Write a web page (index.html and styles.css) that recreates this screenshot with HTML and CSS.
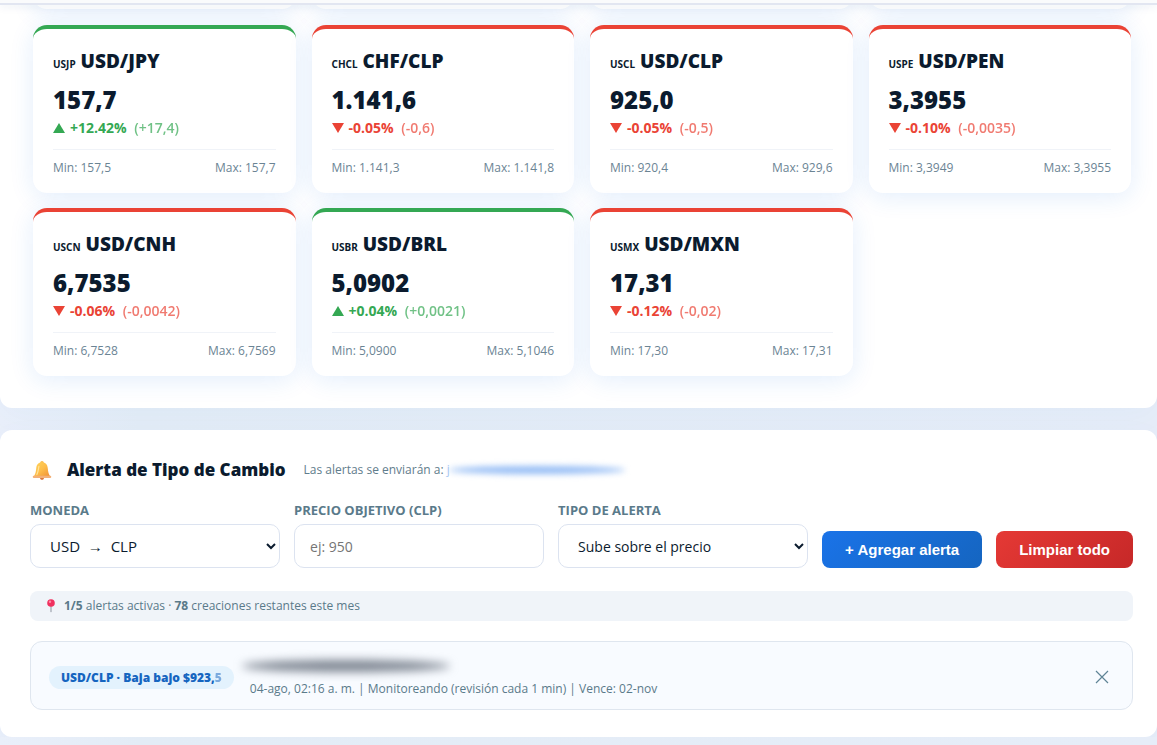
FILE: index.html
```html
<!DOCTYPE html>
<html lang="es">
<head>
	<title>Tipo de Cambio</title>
	<meta charset="utf-8">
	<link rel="stylesheet" href="styles.css">
</head>
<body>
	<header class="topbar"></header>

	<section class="panel rates">
		<div class="prevrow">
			<div></div>
			<div></div>
			<div></div>
			<div></div>
		</div>
		<div class="cards">
			<article class="card up">
				<h3><small>USJP</small> USD/JPY</h3>
				<div class="price">157,7</div>
				<div class="change"><i class="arrow"></i>+12.42% <span>(+17,4)</span></div>
				<div class="range"><span>Min: 157,5</span><span>Max: 157,7</span></div>
			</article>
			<article class="card down">
				<h3><small>CHCL</small> CHF/CLP</h3>
				<div class="price">1.141,6</div>
				<div class="change"><i class="arrow"></i>-0.05% <span>(-0,6)</span></div>
				<div class="range"><span>Min: 1.141,3</span><span>Max: 1.141,8</span></div>
			</article>
			<article class="card down">
				<h3><small>USCL</small> USD/CLP</h3>
				<div class="price">925,0</div>
				<div class="change"><i class="arrow"></i>-0.05% <span>(-0,5)</span></div>
				<div class="range"><span>Min: 920,4</span><span>Max: 929,6</span></div>
			</article>
			<article class="card down">
				<h3><small>USPE</small> USD/PEN</h3>
				<div class="price">3,3955</div>
				<div class="change"><i class="arrow"></i>-0.10% <span>(-0,0035)</span></div>
				<div class="range"><span>Min: 3,3949</span><span>Max: 3,3955</span></div>
			</article>
			<article class="card down">
				<h3><small>USCN</small> USD/CNH</h3>
				<div class="price">6,7535</div>
				<div class="change"><i class="arrow"></i>-0.06% <span>(-0,0042)</span></div>
				<div class="range"><span>Min: 6,7528</span><span>Max: 6,7569</span></div>
			</article>
			<article class="card up">
				<h3><small>USBR</small> USD/BRL</h3>
				<div class="price">5,0902</div>
				<div class="change"><i class="arrow"></i>+0.04% <span>(+0,0021)</span></div>
				<div class="range"><span>Min: 5,0900</span><span>Max: 5,1046</span></div>
			</article>
			<article class="card down">
				<h3><small>USMX</small> USD/MXN</h3>
				<div class="price">17,31</div>
				<div class="change"><i class="arrow"></i>-0.12% <span>(-0,02)</span></div>
				<div class="range"><span>Min: 17,30</span><span>Max: 17,31</span></div>
			</article>
		</div>
	</section>

	<section class="panel alerts">
		<div class="alerthead">
			<svg class="bell" viewBox="0 0 24 24" aria-hidden="true">
				<defs>
					<linearGradient id="gold" x1="0" y1="0" x2="1" y2="1">
						<stop offset="0" stop-color="#ffd45c"/>
						<stop offset="0.5" stop-color="#fdbd4a"/>
						<stop offset="1" stop-color="#ef8f35"/>
					</linearGradient>
				</defs>
				<circle cx="12" cy="20.5" r="2.3" fill="#d9773c"/>
				<circle cx="12" cy="4" r="1.9" fill="#f9b849"/>
				<path d="M12 3.600c-4 0-6 2.800-6.300 6.400-.3 4-1 6.600-2.700 9h18c-1.700-2.400-2.400-5-2.700-9C18 6.400 16 3.600 12 3.600z" fill="url(#gold)"/>
				<path d="M2.800 18.300h18.400c1 0 1.300 2.400 0 2.400H2.800c-1.300 0-1-2.400 0-2.400z" fill="#f3b077"/>
				<path d="M8.600 8c-.6 3-.6 6-2.200 9" fill="none" stroke="#ffe49a" stroke-width="1.300" stroke-linecap="round"/>
			</svg>
			<h2>Alerta de Tipo de Cambio</h2>
			<p>Las alertas se enviarán a: <span class="mail">j</span></p>
		</div>

		<form class="alertform">
			<div class="field">
				<label for="moneda">MONEDA</label>
				<select id="moneda" class="currency">
					<option>USD &nbsp;→&nbsp; CLP</option>
				</select>
			</div>
			<div class="field">
				<label for="precio">PRECIO OBJETIVO (CLP)</label>
				<input type="text" id="precio" placeholder="ej: 950">
			</div>
			<div class="field">
				<label for="tipo">TIPO DE ALERTA</label>
				<select id="tipo">
					<option>Sube sobre el precio</option>
				</select>
			</div>
			<button type="button" class="btn add">+ Agregar alerta</button>
			<button type="button" class="btn clear">Limpiar todo</button>
		</form>

		<div class="quota">
			<svg class="pin" viewBox="0 0 12 14" aria-hidden="true">
				<path d="M5.500 6h1v6.500l-.5 1-.5-1z" fill="#8d93a0"/>
				<circle cx="6" cy="4" r="3.800" fill="#f0315f"/>
				<circle cx="5" cy="2.800" r="1.200" fill="#ff86a4"/>
			</svg>
			<span><b>1/5</b> alertas activas · <b>78</b> creaciones restantes este mes</span>
		</div>

		<div class="alertitem">
			<span class="pill">USD/CLP · Baja bajo $923,<span class="faded">5</span></span>
			<div class="info">
				<div class="hiddenname"></div>
				<p>04-ago, 02:16 a. m. | Monitoreando (revisión cada 1 min) | Vence: 02-nov</p>
			</div>
			<button type="button" class="remove" aria-label="Eliminar">
				<svg viewBox="0 0 14 14"><path d="M1 1l12 12M13 1L1 13" fill="none" stroke="#5f8496" stroke-width="1.200"/></svg>
			</button>
		</div>
	</section>
</body>
</html>
```
FILE: styles.css
```css
* {
	box-sizing: border-box;
}
body {
	margin: 0;
	background: linear-gradient(90deg, #e9effa, #e3ecf6 12%, #e6edf8);
	font-family: "Segoe UI", "Open Sans", "Noto Sans", sans-serif;
	color: #0b1b2e;
	overflow: hidden;
}
h2, h3, p {
	margin: 0;
}
.topbar {
	position: relative;
	z-index: 1;
	height: 5px;
	background-color: #fafbfc;
	border-bottom: 2px solid #e2e6f1;
	box-shadow: 0 2px 8px rgba(30,60,110,0.08);
}
.panel {
	background-color: white;
	box-shadow: 0 8px 32px rgba(26,115,232,0.03);
}
.rates {
	padding: 0 26px 32px 33px;
	border-radius: 0 0 12px 12px;
	margin-bottom: 22px;
}
.prevrow, .cards {
	display: grid;
	grid-template-columns: repeat(4, 1fr);
	gap: 16px;
}
.prevrow {
	margin-top: -36px;
	padding-bottom: 16px;
}
.cards {
	row-gap: 15px;
}
.prevrow div {
	height: 40px;
	border-radius: 14px;
	background-color: white;
	box-shadow: 0 4px 24px rgba(26,115,232,0.12);
}
.card {
	background-color: white;
	border-top: 4px solid #ea4335;
	border-radius: 14px;
	padding: 19px 20px 16px;
	box-shadow: 0 4px 24px rgba(26,115,232,0.12);
}
.card.up {
	border-top-color: #34a853;
}
.card h3 {
	font-family: "Segoe UI", "Noto Sans", sans-serif;
	font-size: 19px;
	line-height: 26px;
	font-weight: 900;
}
.card small {
	font-size: 10px;
	font-weight: 700;
}
.price {
	margin-top: 7px;
	font-family: "Segoe UI", "Noto Sans", sans-serif;
	font-size: 24px;
	line-height: 32px;
	font-weight: 900;
}
.change {
	font-size: 14px;
	line-height: 24px;
	font-weight: 700;
	color: #ea4335;
}
.up .change {
	color: #34a853;
}
.change span {
	margin-left: 4px;
	font-weight: 600;
	opacity: 0.7;
}
.arrow {
	display: inline-block;
	margin-right: 5px;
	border-left: 6px solid transparent;
	border-right: 6px solid transparent;
	border-top: 10px solid #ea4335;
}
.up .arrow {
	border-top: 0;
	border-bottom: 10px solid #34a853;
}
.range {
	display: flex;
	justify-content: space-between;
	margin-top: 9px;
	padding-top: 9px;
	border-top: 1px solid #f0f3f8;
	font-size: 12px;
	line-height: 18px;
	color: #6b8494;
}
.alerts {
	padding: 28px 24px 27px 30px;
	border-radius: 12px;
}
.alerthead {
	display: flex;
	align-items: center;
	line-height: 24px;
}
.bell {
	width: 22px;
	height: 22px;
	margin: 0 14px 0 1px;
}
.alerthead h2 {
	font-family: "Segoe UI", "Noto Sans", sans-serif;
	font-size: 17px;
	font-weight: 900;
}
.alerthead p {
	margin-left: 18px;
	font-size: 12px;
	color: #5f7d8c;
}
.mail {
	position: relative;
	color: #a9c8f3;
}
.mail::after {
	content: "";
	position: absolute;
	left: 2px;
	top: 5px;
	width: 176px;
	height: 8px;
	border-radius: 50%;
	background-color: #94bcf5;
	filter: blur(3px);
}
.alertform {
	display: flex;
	align-items: flex-end;
	gap: 14px;
	margin-top: 18px;
}
.field {
	flex: 1;
	min-width: 0;
}
.field label {
	display: block;
	margin-bottom: 4px;
	font-size: 13px;
	line-height: 20px;
	font-weight: 700;
	color: #5a7a8a;
}
.field select, .field input {
	display: block;
	width: 100%;
	height: 44px;
	border: 1px solid #dce3f0;
	border-radius: 10px;
	background-color: white;
	font-family: inherit;
	font-size: 14px;
	color: #0b1b2e;
}
.field select {
	padding: 0 0 0 15px;
}
.field .currency {
	font-size: 15px;
}
.field input {
	padding: 0 15px;
}
.field input::placeholder {
	color: #757575;
}
.btn {
	height: 37px;
	border: none;
	border-radius: 8px;
	padding: 0 23px;
	color: white;
	font-family: Arial, "Liberation Sans", sans-serif;
	font-size: 15px;
	font-weight: 700;
	cursor: pointer;
}
.add {
	background: linear-gradient(135deg, #1a73e8, #1565c0);
}
.clear {
	background: linear-gradient(135deg, #e53935, #c62828);
}
.quota {
	display: flex;
	align-items: center;
	margin-top: 23px;
	padding: 0 15px;
	border-radius: 8px;
	background-color: #f0f4f9;
	font-size: 12px;
	line-height: 30px;
	color: #5a7a8a;
}
.pin {
	width: 12px;
	height: 14px;
	margin-right: 7px;
}
.alertitem {
	display: flex;
	align-items: center;
	margin-top: 20px;
	padding: 14px 22px 11px 18px;
	border: 1px solid #dfe6ef;
	border-radius: 12px;
	background-color: #f8fbff;
}
.pill {
	padding: 0 12px;
	border-radius: 12px;
	background-color: #e3f2fd;
	font-size: 12px;
	line-height: 23px;
	font-weight: 800;
	color: #1565c0;
}
.faded {
	opacity: 0.5;
}
.info {
	flex: 1;
	margin-left: 16px;
	font-size: 12px;
	line-height: 18px;
	color: #5a7a8a;
}
.hiddenname {
	width: 208px;
	height: 12px;
	margin: 4px 0 8px -8px;
	border-radius: 50%;
	background-color: #7e8692;
	filter: blur(5px);
}
.remove {
	display: flex;
	padding: 1px;
	border: none;
	background: none;
	cursor: pointer;
}
.remove svg {
	width: 14px;
	height: 14px;
}
```
